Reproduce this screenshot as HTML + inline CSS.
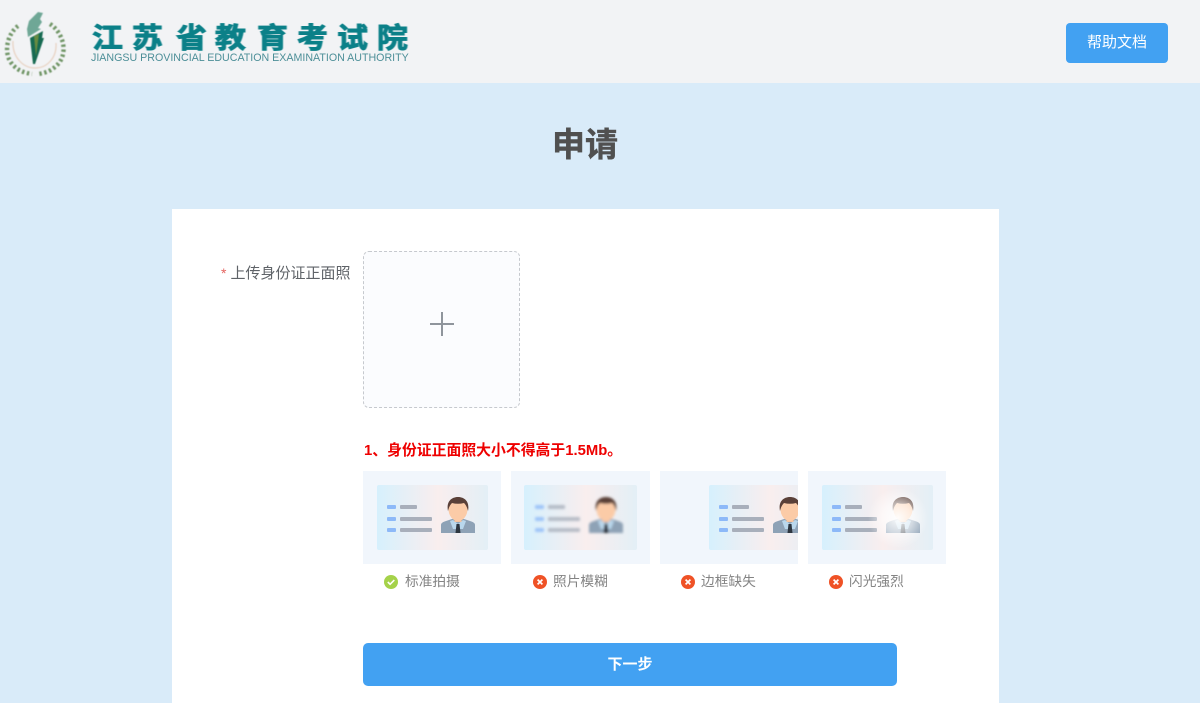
<!DOCTYPE html>
<html lang="zh-CN">
<head>
<meta charset="utf-8">
<title>申请</title>
<style>
html,body{margin:0;padding:0}
body{width:1200px;height:703px;position:relative;overflow:hidden;background:#d9ebf9;font-family:"Liberation Sans","Noto Sans CJK SC",sans-serif}
.a{position:absolute;white-space:nowrap}
.hdr{left:0;top:0;width:1200px;height:83px;background:#f2f3f5}
.help{left:1066px;top:23px;width:102px;height:40px;background:#42a1f2;border-radius:4px;color:#fff;font-size:15px;line-height:39px;text-align:center}
.t{font-weight:bold;color:#0b8088;font-size:30px;line-height:36px;top:19px;font-family:"Noto Sans CJK SC",sans-serif;transform-origin:0 0;transform:scale(1.03,.92);-webkit-text-stroke:1px #0b8088;filter:blur(.4px)}
.en{left:91px;top:52px;font-size:10.67px;line-height:12px;color:#4d8f98;filter:blur(.3px)}
.title{left:552px;top:121px;font-size:33px;line-height:42px;font-weight:bold;color:#505050;font-family:"Noto Sans CJK SC",sans-serif;-webkit-text-stroke:.5px #505050}
.card{left:172px;top:209px;width:827px;height:494px;background:#fff}
.lab{left:221px;top:263px;font-size:15px;line-height:20px;color:#5f6368}
.lab i{font-style:normal;color:#e5645f;font-size:14px;margin-right:4px}
.up{left:363px;top:251px;width:155px;height:155px;background:#fbfcfe;border:1px dashed #c6c9ce;border-radius:6px}
.tip{left:364px;top:441px;font-size:14.85px;line-height:20px;font-weight:bold;color:#ee0000}
.cap{top:572px;font-size:13.7px;line-height:20px;color:#848484}
.next{left:363px;top:643px;width:534px;height:43px;background:#42a1f2;border-radius:5px;color:#fff;font-weight:bold;font-size:15px;line-height:43px;text-align:center}
</style>
</head>
<body>
<svg width="0" height="0" style="position:absolute">
<defs>
<linearGradient id="g" x1="0" x2="1" y1="0" y2="0"><stop offset="0" stop-color="#d6f0fd"/><stop offset=".55" stop-color="#f9eeee"/><stop offset="1" stop-color="#e3eff6"/></linearGradient>
<filter id="b"><feGaussianBlur stdDeviation="1.3"/></filter>
<radialGradient id="fl"><stop offset="0" stop-color="#fff" stop-opacity=".95"/><stop offset=".5" stop-color="#fff" stop-opacity=".6"/><stop offset="1" stop-color="#fff" stop-opacity="0"/></radialGradient>
<g id="lines">
<rect x="24" y="34" width="9" height="4" rx="1" fill="#8db9f8"/><rect x="24" y="46" width="9" height="4" rx="1" fill="#8db9f8"/><rect x="24" y="57" width="9" height="4" rx="1" fill="#8db9f8"/>
<rect x="37" y="34" width="17" height="4" rx="1" fill="#a8afbb"/><rect x="37" y="46" width="32" height="4" rx="1" fill="#a8afbb"/><rect x="37" y="57" width="32" height="4" rx="1" fill="#a8afbb"/>
</g>
<g id="man">
<path d="M78 62V54c0-2 2-3 5-4l9-3h6l9 3c3 1 5 2 5 4v8z" fill="#8ea2b6"/>
<path d="M90 49l5 4 5-4 3 1-3 8h-10l-3-8z" fill="#b9d7ec"/>
<path d="M93.500 53h3l1 9h-5z" fill="#2d3640"/>
<rect x="91.500" y="44" width="7" height="7" fill="#f5c3a0"/>
<ellipse cx="95" cy="38" rx="9.500" ry="12" fill="#fbcba7"/>
<path d="M85 40c-2-10 4-14 10-14s12 4 10 14c-1-4-2-6-4-8-4 1-8 1-12 0-2 2-3 4-4 8z" fill="#5a4038"/>
</g>
</defs>
</svg>

<div class="a hdr"></div>
<svg class="a" style="left:2px;top:9px;filter:blur(.4px)" width="66" height="70" viewBox="0 0 66 70">
<g fill="none" stroke="#4f7d42" stroke-width="4.4" stroke-dasharray="2.4 2.6" opacity=".8"><path d="M16 17C5 25 0 46 12 57c5 5 11 7 18 8"/><path d="M48 15c14 9 19 31 6 42-5 5-11 7-18 8"/></g>
<path d="M11 32c-1 16 10 27 22 27 12 0 22-10 21-25" fill="none" stroke="#e8d3c4" stroke-width="1.300"/>
<path d="M28 29l13-7-1 7 2 0-9 26h-2z" fill="#176a52"/>
<path d="M27 12l9-9 5 1-3 6 2 3-4 6 3 1-13 8-1-8z" fill="#6fa796"/>
<path d="M32 27l5-2-3 22z" fill="#8c9a3a" opacity=".7"/>
</svg>

<div class="a t" style="left:92px">江</div>
<div class="a t" style="left:132px">苏</div>
<div class="a t" style="left:176px">省</div>
<div class="a t" style="left:215px">教</div>
<div class="a t" style="left:257px">育</div>
<div class="a t" style="left:297px">考</div>
<div class="a t" style="left:337px">试</div>
<div class="a t" style="left:377px">院</div>
<div class="a en">JIANGSU PROVINCIAL EDUCATION EXAMINATION AUTHORITY</div>

<div class="a help">帮助文档</div>
<div class="a title">申请</div>
<div class="a card"></div>
<div class="a lab"><i>*</i>上传身份证正面照</div>
<div class="a up"></div>
<svg class="a" style="left:429px;top:311px" width="26" height="26"><path d="M13 1v24M1 13h24" stroke="#8f959c" stroke-width="2"/></svg>
<div class="a tip">1、身份证正面照大小不得高于1.5Mb。</div>

<svg class="a" style="left:363px;top:471px" width="138" height="93"><rect width="138" height="93" fill="#f1f6fc"/><rect x="14" y="14" width="111" height="65" rx="2" fill="url(#g)"/><use href="#lines"/><use href="#man"/></svg>
<svg class="a" style="left:511px;top:471px" width="139" height="93"><rect width="139" height="93" fill="#f1f6fc"/><rect x="13" y="14" width="113" height="65" rx="2" fill="url(#g)"/><g filter="url(#b)" opacity=".8"><use href="#lines"/></g><g filter="url(#b)"><use href="#man"/></g></svg>
<svg class="a" style="left:660px;top:471px" width="138" height="93"><rect width="138" height="93" fill="#f1f6fc"/><rect x="49" y="14" width="111" height="65" rx="2" fill="url(#g)"/><g transform="translate(35,0)"><use href="#lines"/><use href="#man"/></g></svg>
<svg class="a" style="left:808px;top:471px" width="138" height="93"><rect width="138" height="93" fill="#f1f6fc"/><rect x="14" y="14" width="111" height="65" rx="2" fill="url(#g)"/><use href="#lines"/><use href="#man"/><ellipse cx="90" cy="47" rx="30" ry="30" fill="url(#fl)"/></svg>

<svg class="a" style="left:384px;top:575px" width="14" height="14"><circle cx="7" cy="7" r="7" fill="#a5d24a"/><path d="M3.800 7l2.300 2.300 4.200-4.200" fill="none" stroke="#fff" stroke-width="1.600"/></svg>
<div class="a cap" style="left:405px">标准拍摄</div>
<svg class="a" style="left:533px;top:575px" width="14" height="14"><circle cx="7" cy="7" r="7" fill="#ef5226"/><path d="M4.600 4.600l4.800 4.800M9.400 4.600l-4.800 4.800" stroke="#fff" stroke-width="1.700"/></svg>
<div class="a cap" style="left:553px">照片模糊</div>
<svg class="a" style="left:681px;top:575px" width="14" height="14"><circle cx="7" cy="7" r="7" fill="#ef5226"/><path d="M4.600 4.600l4.800 4.800M9.400 4.600l-4.800 4.800" stroke="#fff" stroke-width="1.700"/></svg>
<div class="a cap" style="left:701px">边框缺失</div>
<svg class="a" style="left:829px;top:575px" width="14" height="14"><circle cx="7" cy="7" r="7" fill="#ef5226"/><path d="M4.600 4.600l4.800 4.800M9.400 4.600l-4.800 4.800" stroke="#fff" stroke-width="1.700"/></svg>
<div class="a cap" style="left:849px">闪光强烈</div>

<div class="a next">下一步</div>
</body>
</html>
